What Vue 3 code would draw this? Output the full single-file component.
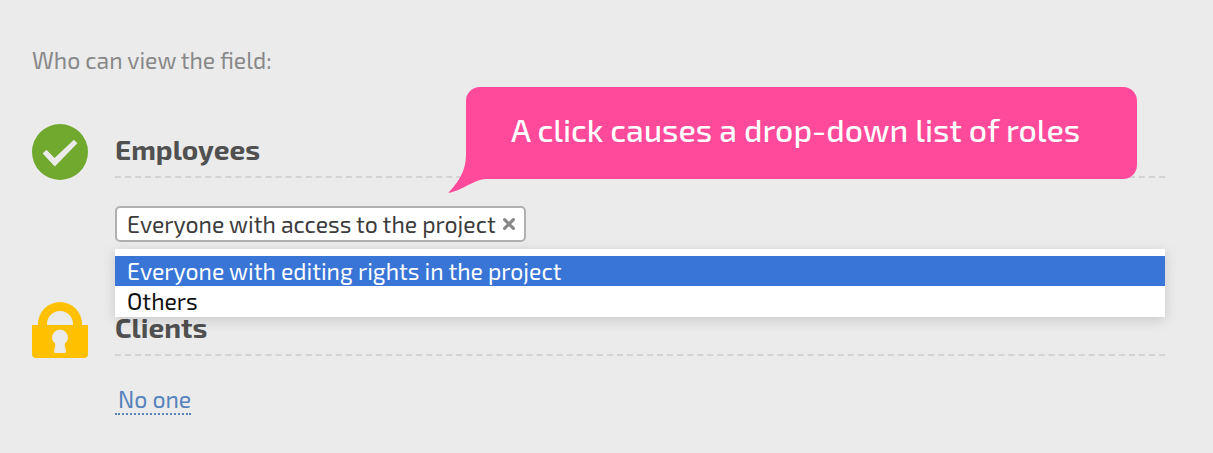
<script setup>
import { ref } from 'vue'

const selected = ref(['Everyone with access to the project'])
const options = ref(['Everyone with editing rights in the project', 'Others'])
const active = ref(0)

function remove(role) {
  selected.value = selected.value.filter((r) => r !== role)
  options.value.push(role)
}

function add(role) {
  options.value = options.value.filter((r) => r !== role)
  selected.value.push(role)
}
</script>

<template>
  <main class="page">
    <p class="intro">Who can view the field:</p>

    <section class="group">
      <svg class="icon" viewBox="0 0 56 56" aria-hidden="true">
        <circle cx="28" cy="28" r="28" fill="#70a92e" />
        <path d="M10.7 29.4 L14.4 25.7 L22.6 34 L41.9 15.7 L45.4 19.2 L22.8 42.4 Z" fill="#ebebeb" />
      </svg>
      <div class="body">
        <h2 class="title">Employees</h2>
        <div class="picker">
          <div class="tags">
            <span v-for="role in selected" :key="role" class="tag">
              {{ role }}
              <button type="button" class="remove" :aria-label="'Remove ' + role" @click="remove(role)">
                <svg viewBox="0 0 14 14" aria-hidden="true">
                  <path d="M2.6 2.6 L11.4 11.4 M11.4 2.6 L2.6 11.4" stroke="#888" stroke-width="3.2" stroke-linecap="round" />
                </svg>
              </button>
            </span>
          </div>
          <div class="menu" role="listbox" aria-label="Roles">
            <button
              v-for="(role, i) in options"
              :key="role"
              type="button"
              role="option"
              :aria-selected="i === active"
              :class="['option', { active: i === active }]"
              @mouseenter="active = i"
              @click="add(role)"
            >{{ role }}</button>
          </div>
        </div>
        <div class="callout">
          A click causes a drop-down list of roles
          <svg class="tail" viewBox="0 0 38 38" aria-hidden="true">
            <path d="M18 0 C18 16 10 28 0 38 C14 36 26 24 38 24 L38 0 Z" fill="#ff4a9b" />
          </svg>
        </div>
      </div>
    </section>

    <section class="group">
      <svg class="icon" viewBox="0 0 56 56" aria-hidden="true">
        <path
          fill="#ffc000"
          fill-rule="evenodd"
          d="M6 23 V22 A22 22 0 0 1 50 22 V23 H56 V52 Q56 56 52 56 H4 Q0 56 0 52 V23 Z M15 23 H41 V22 A13 13 0 0 0 15 22 Z M23.4 42 A8 8 0 1 1 32.6 42 C32.6 45 34 47 34 49.5 Q34 51 32 51 H24 Q22 51 22 49.5 C22.4 47 23.4 45 23.4 42 Z"
        />
      </svg>
      <div class="body">
        <h2 class="title">Clients</h2>
        <a href="#" class="link" @click.prevent>No one</a>
      </div>
    </section>
  </main>
</template>

<style>
body {
  background: #ebebeb;
}
</style>

<style scoped>
.page {
  padding: 45px 48px 40px 32px;
  font-family: "Exo 2", Roboto, "Liberation Sans", sans-serif;
  font-size: 23px;
  line-height: 30px;
  color: #3c3c3c;
}

.intro {
  margin: 0 0 49px;
  color: #888;
}

.group {
  display: flex;
  gap: 27px;
}

.group + .group {
  margin-top: 60px;
}

.icon {
  flex: none;
  width: 56px;
  height: 56px;
}

.body {
  position: relative;
  flex: 1;
  min-width: 0;
}

.title {
  margin: 0 0 28px;
  padding-bottom: 2px;
  border-bottom: 2px dashed #d3d3d3;
  font-size: 28px;
  font-weight: 700;
  line-height: 50px;
  color: #505050;
}

.picker {
  position: relative;
}

.tags {
  display: flex;
  gap: 8px;
}

.tag {
  display: flex;
  align-items: center;
  gap: 6px;
  padding: 1px 8px 1px 10px;
  border: 2px solid #b0b0b0;
  border-radius: 5px;
  background: #fff;
}

.remove {
  display: flex;
  padding: 0;
  border: 0;
  background: none;
  cursor: pointer;
}

.remove svg {
  width: 14px;
  height: 14px;
}

.menu {
  position: absolute;
  z-index: 1;
  top: calc(100% + 7px);
  left: 0;
  right: 0;
  padding: 7px 0 1px;
  background: #fff;
  box-shadow: 0 3px 12px rgba(0, 0, 0, 0.15);
}

.option {
  display: block;
  width: 100%;
  padding: 0 12px;
  border: 0;
  background: none;
  font: inherit;
  color: #111;
  text-align: left;
  cursor: pointer;
}

.option.active {
  background: #3875d7;
  color: #fff;
}

.callout {
  position: absolute;
  z-index: 2;
  top: -37px;
  left: 351px;
  right: 28px;
  padding: 19px 45px 27px;
  border-radius: 14px;
  background: #ff4a9b;
  font-size: 32px;
  font-weight: 500;
  line-height: 46px;
  color: #fff;
}

.tail {
  position: absolute;
  left: -18px;
  bottom: -14px;
  width: 38px;
  height: 38px;
}

.link {
  display: inline-block;
  padding-left: 3px;
  border-bottom: 2px dotted #5583bd;
  line-height: 28px;
  color: #5583bd;
  text-decoration: none;
}
</style>
